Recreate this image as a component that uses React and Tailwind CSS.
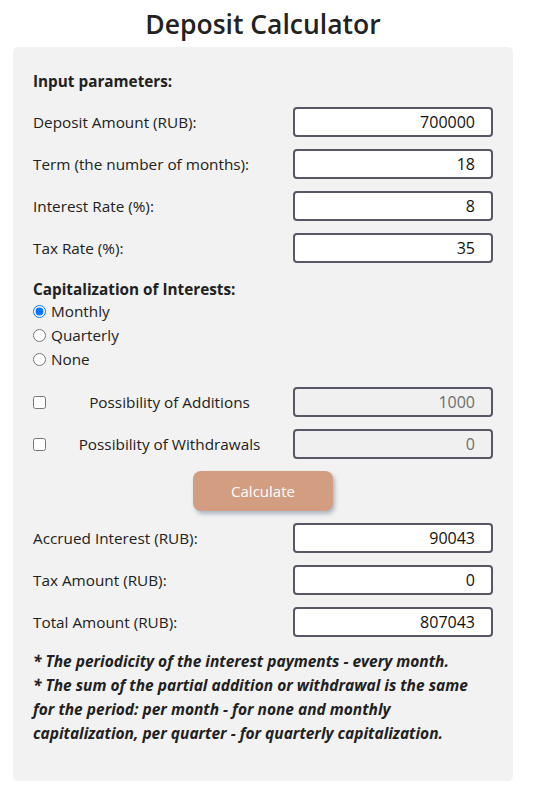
import React, { useState } from 'react';

const font = { fontFamily: '"Open Sans", "Noto Sans", sans-serif' };

const Field = ({ label, value, disabled }) => (
  <div className="flex items-center justify-between h-[30px]">
    <span>{label}</span>
    <input
      readOnly
      disabled={disabled}
      value={value}
      className={`w-[200px] h-[30px] border-2 border-[#5b5566] rounded-[4px] text-right pr-[16px] text-[16px] outline-none ${
        disabled ? 'bg-[#f0f0f0] text-[#6d6d6d]' : 'bg-white text-[#111]'
      }`}
    />
  </div>
);

const Option = ({ label, value, disabled }) => (
  <div className="flex items-center h-[30px]">
    <input type="checkbox" className="w-[13px] h-[13px] m-0 accent-[#0075ff]" />
    <span className="flex-1 text-center">{label}</span>
    <input
      readOnly
      disabled={disabled}
      value={value}
      className="w-[200px] h-[30px] border-2 border-[#5b5566] rounded-[4px] text-right pr-[16px] text-[16px] bg-[#f0f0f0] text-[#6d6d6d] outline-none"
    />
  </div>
);

export default function App() {
  const [cap, setCap] = useState('monthly');

  return (
    <div className="w-[533px] bg-white text-[#212121] text-[15.3px] leading-[20px]" style={font}>
      <h1 className="w-[500px] ml-[13px] h-[47px] flex items-center justify-center text-[26.5px] font-semibold text-[#222]">
        Deposit Calculator
      </h1>

      <div className="w-[500px] ml-[13px] bg-[#f2f2f2] rounded-[5px] pt-[24px] pb-[36px] px-[20px]">
        {/* INPUT PARAMETERS */}
        <div className="font-bold h-[20px]">Input parameters:</div>
        <div className="mt-[16px] flex flex-col gap-[12px]">
          <Field label="Deposit Amount (RUB):" value="700000" />
          <Field label="Term (the number of months):" value="18" />
          <Field label="Interest Rate (%):" value="8" />
          <Field label="Tax Rate (%):" value="35" />
        </div>

        {/* CAPITALIZATION */}
        <div className="font-bold h-[20px] mt-[16px]">Capitalization of Interests:</div>
        <div className="flex flex-col">
          {[
            ['monthly', 'Monthly'],
            ['quarterly', 'Quarterly'],
            ['none', 'None'],
          ].map(([id, name]) => (
            <label key={id} className="flex items-center h-[24px] gap-[5px]">
              <input
                type="radio"
                name="cap"
                checked={cap === id}
                onChange={() => setCap(id)}
                className="w-[13px] h-[13px] m-0 accent-[#0075ff]"
              />
              <span>{name}</span>
            </label>
          ))}
        </div>

        <div className="mt-[16px] flex flex-col gap-[12px]">
          <Option label="Possibility of Additions" value="1000" disabled />
          <Option label="Possibility of Withdrawals" value="0" disabled />
        </div>

        {/* CALCULATE */}
        <div className="flex justify-center mt-[12px]">
          <button className="w-[140px] h-[40px] rounded-[8px] bg-[#d29d81] text-white text-[15px] shadow-[2px_3px_4px_rgba(90,110,140,0.45)]">
            Calculate
          </button>
        </div>

        {/* RESULTS */}
        <div className="mt-[12px] flex flex-col gap-[12px]">
          <Field label="Accrued Interest (RUB):" value="90043" />
          <Field label="Tax Amount (RUB):" value="0" />
          <Field label="Total Amount (RUB):" value="807043" />
        </div>

        {/* NOTES */}
        <div className="mt-[12px] font-bold italic leading-[24px] text-[15.5px]">
          <p>* The periodicity of the interest payments - every month.</p>
          <p>
            * The sum of the partial addition or withdrawal is the same
            <br />
            for the period: per month - for none and monthly
            <br />
            capitalization, per quarter - for quarterly capitalization.
          </p>
        </div>
      </div>
    </div>
  );
}
